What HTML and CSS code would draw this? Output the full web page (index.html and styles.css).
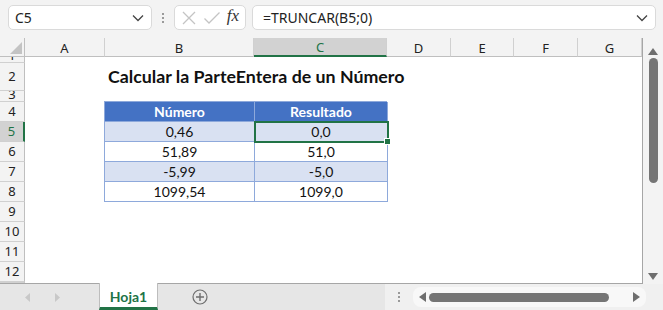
FILE: index.html
```html
<!DOCTYPE html>
<html lang="es">
<head>
  <meta charset="UTF-8" />
  <title>Hoja1</title>
  <link rel="stylesheet" href="styles.css">
</head>
<body>

<div class="app">

  <div class="formula-bar">
    <div class="name-box">
      <span>C5</span>
      <svg class="chev" width="12" height="8" viewBox="0 0 12 8"><path d="M1 1.5 L6 6.5 L11 1.5" fill="none" stroke="#444" stroke-width="1.3"/></svg>
    </div>
    <div class="grip"><i></i><i></i><i></i></div>
    <div class="fx-box">
      <svg width="16" height="16" viewBox="0 0 16 16"><path d="M2 2 L14 14 M14 2 L2 14" stroke="#c4c4c4" stroke-width="1.3" fill="none"/></svg>
      <svg width="18" height="16" viewBox="0 0 18 16"><path d="M1.5 8.5 L6 13 L16.5 2.5" stroke="#c4c4c4" stroke-width="1.3" fill="none"/></svg>
      <span class="fx">fx</span>
    </div>
    <div class="formula">
      <span>=TRUNCAR(B5;0)</span>
      <svg class="chev" width="12" height="8" viewBox="0 0 12 8"><path d="M1 1.5 L6 6.5 L11 1.5" fill="none" stroke="#444" stroke-width="1.3"/></svg>
    </div>
  </div>

  <div class="main">
    <div class="sheet">
      <div class="corner"><span class="tri"></span></div>
      <div class="ch">A</div>
      <div class="ch">B</div>
      <div class="ch active">C</div>
      <div class="ch">D</div>
      <div class="ch">E</div>
      <div class="ch">F</div>
      <div class="ch">G</div>

      <div class="rh tiny">1</div>
      <div class="rh">2</div>
      <div class="rh tiny">3</div>
      <div class="rh">4</div>
      <div class="rh active">5</div>
      <div class="rh">6</div>
      <div class="rh">7</div>
      <div class="rh">8</div>
      <div class="rh">9</div>
      <div class="rh">10</div>
      <div class="rh">11</div>
      <div class="rh">12</div>
      <div class="rh"></div>

      <div class="title">Calcular la ParteEntera de un Número</div>

      <div class="data">
        <div class="hd">Número</div>
        <div class="hd">Resultado</div>
        <div class="band">0,46</div>
        <div class="band selected">0,0<span class="handle"></span></div>
        <div>51,89</div>
        <div>51,0</div>
        <div class="band">-5,99</div>
        <div class="band">-5,0</div>
        <div>1099,54</div>
        <div>1099,0</div>
      </div>
    </div>

    <div class="vscroll">
      <svg width="10" height="7" viewBox="0 0 10 7"><path d="M5 0 L10 7 L0 7 Z" fill="#6e6e6e"/></svg>
      <div class="vthumb"></div>
      <div class="spacer"></div>
      <svg width="10" height="7" viewBox="0 0 10 7"><path d="M0 0 L10 0 L5 7 Z" fill="#6e6e6e"/></svg>
    </div>
  </div>

  <div class="tabbar">
    <div class="nav">
      <svg width="6" height="9" viewBox="0 0 6 9"><path d="M5 0 L0 4.5 L5 9 Z" fill="#c8c8c8"/></svg>
      <svg width="6" height="9" viewBox="0 0 6 9"><path d="M1 0 L6 4.5 L1 9 Z" fill="#c8c8c8"/></svg>
    </div>
    <div class="tab">Hoja1</div>
    <div class="add">
      <svg width="16" height="16" viewBox="0 0 16 16"><circle cx="8" cy="8" r="7" fill="none" stroke="#6e6e6e" stroke-width="1.2"/><path d="M8 4 V12 M4 8 H12" stroke="#6e6e6e" stroke-width="1.4"/></svg>
    </div>
    <div class="hscroll-area">
      <div class="grip small"><i></i><i></i><i></i></div>
      <div class="hscroll">
        <svg width="7" height="10" viewBox="0 0 7 10"><path d="M7 0 L0 5 L7 10 Z" fill="#6e6e6e"/></svg>
        <div class="hthumb"></div>
        <svg width="7" height="10" viewBox="0 0 7 10"><path d="M0 0 L7 5 L0 10 Z" fill="#6e6e6e"/></svg>
      </div>
    </div>
  </div>

</div>

</body>
</html>
```

FILE: styles.css
```css
body {
  margin: 0;
  padding: 0;
  font-family: 'Noto Sans', sans-serif;
  background: #f3f3f3;
}

.app {
  width: 663px;
  height: 310px;
  overflow: hidden;
  display: flex;
  flex-direction: column;
}

/* formula bar */

.formula-bar {
  height: 38px;
  box-sizing: border-box;
  padding: 5px 7px 0 8px;
  display: flex;
  align-items: flex-start;
}

.name-box, .fx-box, .formula {
  height: 25px;
  box-sizing: border-box;
  background: white;
  border: 1px solid #dadada;
  border-radius: 5px;
  display: flex;
  align-items: center;
  font-size: 14px;
  color: #222;
}

.name-box {
  width: 144px;
  padding: 0 7px 0 6px;
  justify-content: space-between;
}

.grip {
  width: 22px;
  height: 25px;
  display: flex;
  flex-direction: column;
  align-items: center;
  justify-content: center;
  gap: 2px;
}

.grip i {
  width: 2px;
  height: 2px;
  background: #9a9a9a;
  display: block;
}

.fx-box {
  width: 72px;
  padding: 0 6px 0 6px;
  justify-content: space-between;
}

.fx {
  font-family: 'Liberation Serif', serif;
  font-style: italic;
  font-size: 17px;
  color: #333;
  margin-top: -3px;
}

.formula {
  flex: 1;
  margin-left: 6px;
  padding: 0 7px 0 10px;
  justify-content: space-between;
}

/* sheet */

.main {
  height: 246px;
  display: flex;
}

.sheet {
  width: 643px;
  box-sizing: border-box;
  border-right: 1px solid #a6a6a6;
  border-bottom: 1px solid #a6a6a6;
  background: white;
  display: grid;
  grid-template-columns: 25px 80px 149px 133px 64px 63px 64px 64px;
  grid-template-rows: 19px 6px 28px 11px repeat(9, 20px) 1fr;
  overflow: hidden;
  font-family: Lato, sans-serif;
  font-size: 14px;
}

.corner {
  background: #f3f3f3;
  border-right: 1px solid #bfbfbf;
  border-bottom: 1px solid #bfbfbf;
  position: relative;
}

.tri {
  position: absolute;
  right: 2px;
  bottom: 2px;
  width: 0;
  height: 0;
  border-left: 12px solid transparent;
  border-bottom: 12px solid #c3c3c3;
}

.ch {
  background: #f3f3f3;
  border-right: 1px solid #d0d0d0;
  border-bottom: 1px solid #bfbfbf;
  font-family: 'Noto Sans', sans-serif;
  font-size: 13px;
  color: #222;
  display: flex;
  align-items: center;
  justify-content: center;
  padding-top: 1px;
}

.ch.active {
  background: #d2d2d2;
  border-bottom: 2px solid #217346;
  color: #217346;
}

.rh {
  grid-column: 1;
  background: #f3f3f3;
  border-right: 1px solid #bfbfbf;
  border-bottom: 1px solid #d0d0d0;
  font-family: 'Noto Sans', sans-serif;
  font-size: 13px;
  color: #222;
  display: flex;
  align-items: center;
  justify-content: center;
  overflow: hidden;
  line-height: 1;
}

.rh.tiny {
  align-items: flex-end;
}

.rh.active {
  background: #d2d2d2;
  border-right: 2px solid #217346;
  color: #217346;
}

.title {
  grid-column: 3 / 9;
  grid-row: 3;
  font-weight: bold;
  font-size: 17.8px;
  color: #111;
  padding: 0 0 4px 3px;
  display: flex;
  align-items: flex-end;
  white-space: nowrap;
}

.data {
  grid-column: 3 / 5;
  grid-row: 5 / 10;
  margin: -1px 0 0 -1px;
  display: grid;
  grid-template-columns: 150px 133px;
  grid-template-rows: repeat(5, 20px);
  border-top: 1px solid #8ea9db;
  border-left: 1px solid #8ea9db;
  position: relative;
}

.data div {
  border-right: 1px solid #8ea9db;
  border-bottom: 1px solid #8ea9db;
  display: flex;
  align-items: center;
  justify-content: center;
  color: #111;
  position: relative;
}

.data .hd {
  background: #4472c4;
  color: white;
  font-weight: bold;
}

.data .band {
  background: #d9e1f2;
}

.data .selected {
  outline: 2px solid #217346;
  outline-offset: -1px;
  z-index: 1;
}

.handle {
  position: absolute;
  right: -4px;
  bottom: -4px;
  width: 5px;
  height: 5px;
  background: #217346;
  border: 1px solid white;
}

/* scrollbars */

.vscroll {
  width: 20px;
  display: flex;
  flex-direction: column;
  align-items: center;
  padding: 10px 0 4px;
  box-sizing: border-box;
}

.vthumb {
  width: 9px;
  height: 125px;
  margin-top: 3px;
  background: #757575;
  border-radius: 5px;
}

.spacer {
  flex: 1;
}

.tabbar {
  height: 26px;
  display: flex;
  background: #e6e6e6;
}

.nav {
  width: 99px;
  display: flex;
  align-items: center;
  gap: 23px;
  padding-left: 25px;
  box-sizing: border-box;
}

.tab {
  width: 59px;
  box-sizing: border-box;
  background: white;
  border-left: 1px solid #bdbdbd;
  border-right: 1px solid #bdbdbd;
  border-bottom: 3px solid #217346;
  margin-top: -1px;
  color: #217346;
  font-family: Lato, sans-serif;
  font-weight: bold;
  font-size: 14px;
  display: flex;
  align-items: center;
  justify-content: center;
  padding-top: 2px;
}

.add {
  width: 227px;
  box-sizing: border-box;
  display: flex;
  align-items: center;
  padding-left: 34px;
}

.hscroll-area {
  flex: 1;
  background: #f0f0f0;
  display: flex;
  align-items: center;
}

.grip.small {
  width: 28px;
  height: 26px;
}

.hscroll {
  width: 233px;
  height: 20px;
  background: #f8f8f8;
  border-radius: 8px;
  display: flex;
  align-items: center;
  padding: 0 6px;
  box-sizing: border-box;
  gap: 3px;
}

.hthumb {
  width: 180px;
  height: 9px;
  background: #757575;
  border-radius: 5px;
  margin-right: auto;
}
```
